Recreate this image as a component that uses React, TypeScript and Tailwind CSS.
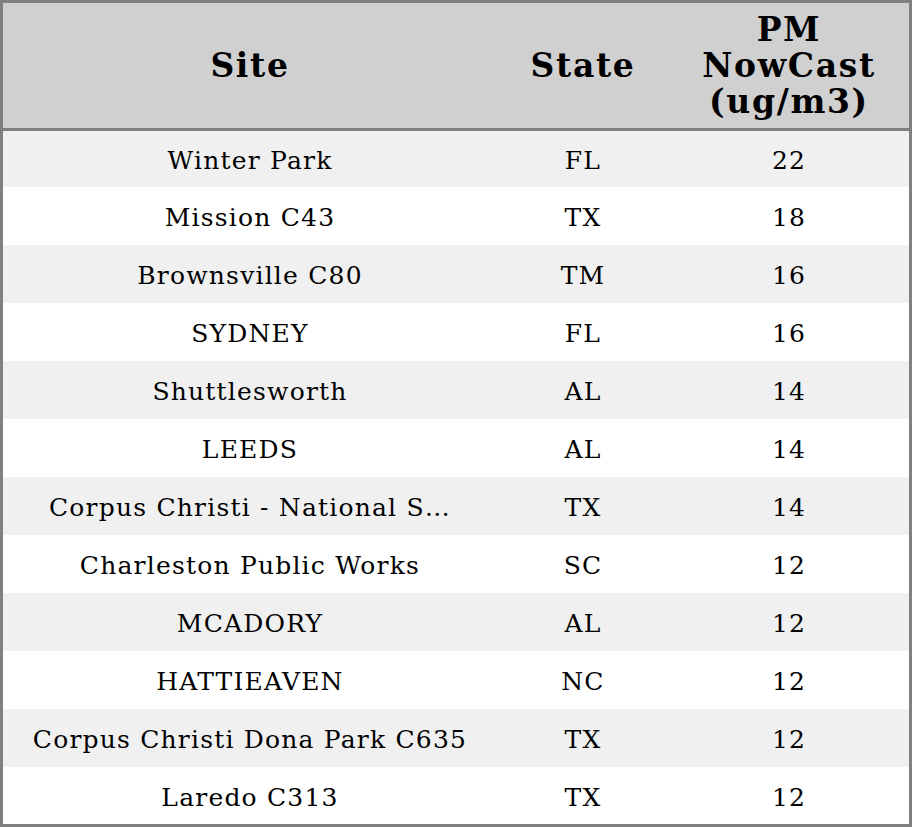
import React from "react";

const rows = [
  { site: "Winter Park", state: "FL", pm: 22 },
  { site: "Mission C43", state: "TX", pm: 18 },
  { site: "Brownsville C80", state: "TM", pm: 16 },
  { site: "SYDNEY", state: "FL", pm: 16 },
  { site: "Shuttlesworth", state: "AL", pm: 14 },
  { site: "LEEDS", state: "AL", pm: 14 },
  { site: "Corpus Christi - National S…", state: "TX", pm: 14 },
  { site: "Charleston Public Works", state: "SC", pm: 12 },
  { site: "MCADORY", state: "AL", pm: 12 },
  { site: "HATTIEAVEN", state: "NC", pm: 12 },
  { site: "Corpus Christi Dona Park C635", state: "TX", pm: 12 },
  { site: "Laredo C313", state: "TX", pm: 12 },
];

export default function App() {
  return (
    <div
      className="w-[912px] h-[827px] border-[3px] border-[#808080] bg-white text-black flex flex-col overflow-hidden"
      style={{ fontFamily: '"DejaVu Serif", serif' }}
    >
      {/* Header */}
      <div className="grid grid-cols-[494px_172px_240px] h-[128px] shrink-0 bg-[#d0d0d0] border-b-[3px] border-[#808080] font-bold text-[33px] leading-[36px] tracking-[0.05em]">
        <div className="flex items-center justify-center text-center">Site</div>
        <div className="flex items-center justify-center text-center">State</div>
        <div className="flex items-center justify-center text-center">
          PM
          <br />
          NowCast
          <br />
          (ug/m3)
        </div>
      </div>

      {/* Body */}
      <div className="flex-1 flex flex-col">
        {rows.map((r, i) => (
          <div
            key={i}
            className={`grid grid-cols-[494px_172px_240px] items-center pt-[4px] text-[25px] tracking-[0.048em] ${
              i === 0 ? "h-[56px]" : i === rows.length - 1 ? "flex-1" : "h-[58px]"
            } ${i % 2 === 0 ? "bg-[#f0f0f0]" : "bg-white"}`}
          >
            <div className="text-center whitespace-nowrap">{r.site}</div>
            <div className="text-center">{r.state}</div>
            <div className="text-center">{r.pm}</div>
          </div>
        ))}
      </div>
    </div>
  );
}
